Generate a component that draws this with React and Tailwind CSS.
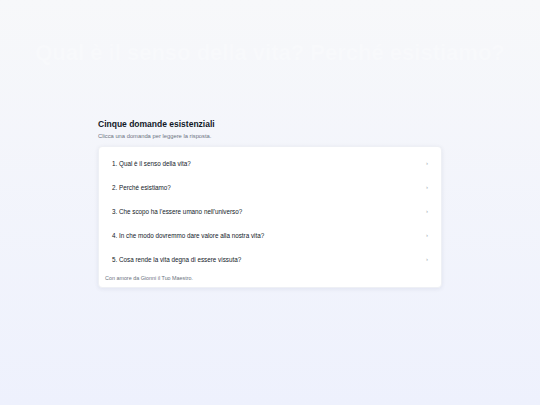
const QUESTIONS = [
  'Qual è il senso della vita?',
  'Perché esistiamo?',
  "Che scopo ha l'essere umano nell'universo?",
  'In che modo dovremmo dare valore alla nostra vita?',
  'Cosa rende la vita degna di essere vissuta?',
];

export default function App() {
  return (
    <div
      className="relative min-h-screen w-full overflow-hidden bg-gradient-to-b from-[#f7f8fa] to-[#eef1fd] flex items-center justify-center"
      style={{ fontFamily: '"Liberation Sans", Arial, sans-serif' }}
    >
      <div aria-hidden="true" className="absolute left-0 right-0 top-[36px] text-center whitespace-nowrap text-[22px] font-bold text-white/25 select-none">
        Qual è il senso della vita? Perché esistiamo?
      </div>

      <div className="w-[344px] flex flex-col pt-[2px]">
        <h1 className="text-[8.5px] font-bold text-[#111827] leading-[11px] mt-[-1px]">Cinque domande esistenziali</h1>
        <p className="mt-[1px] text-[5.8px] text-[#6b7280] leading-[10px]">Clicca una domanda per leggere la risposta.</p>

        <div className="mt-[5px] bg-white rounded-[4px] shadow-[0_1px_4px_rgba(30,41,90,0.08)] border border-[#eef0f5] pt-[5px] pb-[5px] px-[6px]">
          <ul className="flex flex-col">
            {QUESTIONS.map((q, i) => (
              <li key={i} className="h-[24px] flex items-center justify-between pl-[7px] pr-[7px]">
                <span className="text-[6.3px] text-[#111827]">
                  {i + 1}. {q}
                </span>
                <span className="text-[6px] text-[#9ca3af]">›</span>
              </li>
            ))}
          </ul>
          <p className="mt-[2px] text-[5.4px] text-[#6b7280] leading-[8px]">Con amore da Gionni il Tuo Maestro.</p>
        </div>
      </div>
    </div>
  );
}
